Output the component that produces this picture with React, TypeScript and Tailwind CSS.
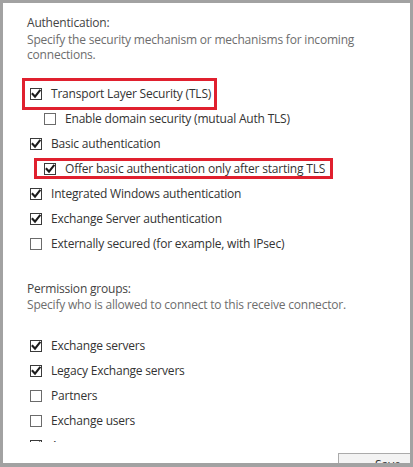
import React from "react";

const font = { fontFamily: '"Open Sans", "Noto Sans", sans-serif' };

function Box({ checked }: { checked: boolean }) {
  return (
    <span
      className={`relative flex h-[12px] w-[12px] shrink-0 items-center justify-center border bg-white ${
        checked ? "border-[#3a3a3a]" : "border-[#6b6b6b]"
      }`}
    >
      {checked && (
        <svg viewBox="0 0 12 12" className="absolute left-[-1px] top-[-1px] h-[12px] w-[12px]">
          <path d="M2.6 6.1 L5 8.6 L9.7 2.7" fill="none" stroke="#1b1b1b" strokeWidth="2.1" strokeLinecap="square" />
        </svg>
      )}
    </span>
  );
}

function Row({
  label,
  checked,
  indent = false,
  children,
}: {
  label: string;
  checked: boolean;
  indent?: boolean;
  children?: React.ReactNode;
}) {
  return (
    <div className={`relative flex h-[25px] items-center ${indent ? "pl-[17px]" : "pl-[3px]"}`}>
      {children}
      <Box checked={checked} />
      <span className="ml-[9px] whitespace-nowrap text-[12px] leading-[15px] tracking-[-0.2px] text-[#333333]">
        {label}
      </span>
    </div>
  );
}

export default function App() {
  return (
    <div className="h-[467px] w-[413px] bg-[#a2a2a2] pb-[4px] pl-[3px] pr-[3px] pt-[3px]" style={font}>
      <div className="flex h-full w-full flex-col overflow-hidden bg-white">
        <div className="h-[439px] overflow-hidden pl-[24px] pt-[12px]">
          <div className="text-[12px] leading-[16px] tracking-[-0.2px] text-[#444444]">Authentication:</div>
          <div className="mt-[1px] w-[345px] text-[12px] leading-[15px] tracking-[-0.2px] text-[#6d6d6d]">
            Specify the security mechanism or mechanisms for incoming connections.
          </div>
          <div className="mt-[19px] flex flex-col">
            <Row label="Transport Layer Security (TLS)" checked>
              <span className="absolute left-[-5px] top-[-3.5px] h-[32px] w-[195px] border-[3px] border-[#e0202e]" />
            </Row>
            <Row label="Enable domain security (mutual Auth TLS)" checked={false} indent />
            <Row label="Basic authentication" checked />
            <Row label="Offer basic authentication only after starting TLS" checked indent>
              <span className="absolute left-[7px] top-[1.5px] h-[21px] w-[299px] border-[3px] border-[#e0202e]" />
            </Row>
            <Row label="Integrated Windows authentication" checked />
            <Row label="Exchange Server authentication" checked />
            <Row label="Externally secured (for example, with IPsec)" checked={false} />
          </div>
          <div className="mt-[25px] text-[12px] leading-[16px] tracking-[-0.2px] text-[#444444]">Permission groups:</div>
          <div className="text-[12px] leading-[15px] tracking-[-0.2px] text-[#6d6d6d]">
            Specify who is allowed to connect to this receive connector.
          </div>
          <div className="mt-[21px] flex flex-col">
            <Row label="Exchange servers" checked />
            <Row label="Legacy Exchange servers" checked />
            <Row label="Partners" checked={false} />
            <Row label="Exchange users" checked={false} />
            <Row label="Anonymous users" checked />
          </div>
        </div>
        <div className="flex flex-1 justify-end overflow-hidden pt-[11px]">
          <div className="flex h-[24px] w-[100px] shrink-0 translate-x-[28px] items-center justify-center border border-[#ababab] bg-[#f3f3f3] text-[12px] text-[#333333]">
            Save
          </div>
        </div>
      </div>
    </div>
  );
}
